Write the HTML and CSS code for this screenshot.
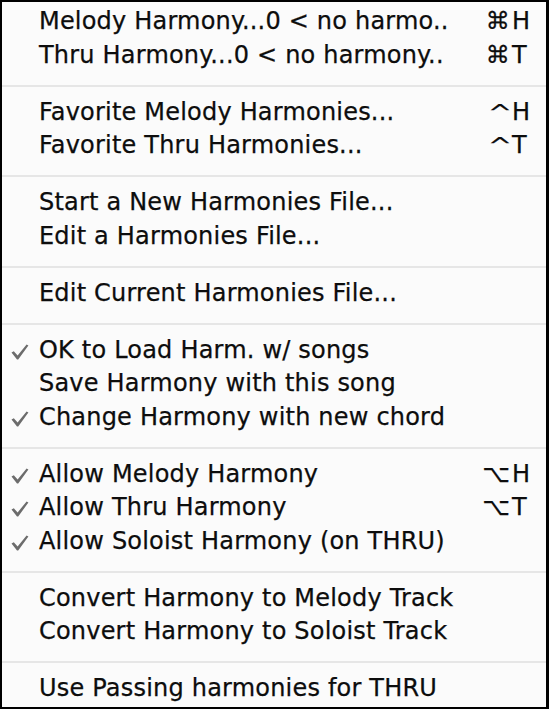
FILE: index.html
```html
<!DOCTYPE html>
<html>
<head>
<meta charset="utf-8">
<link rel="stylesheet" href="styles.css">
</head>
<body>
<div class="menu">
  <div class="item"><span class="check"></span><span class="label">Melody Harmony...0 &lt; no harmo..</span><span class="mod">⌘</span><span class="key">H</span></div>
  <div class="item"><span class="check"></span><span class="label">Thru Harmony...0 &lt; no harmony..</span><span class="mod">⌘</span><span class="key">T</span></div>
  <div class="sep"></div>
  <div class="item"><span class="check"></span><span class="label">Favorite Melody Harmonies...</span><span class="mod caret">^</span><span class="key">H</span></div>
  <div class="item"><span class="check"></span><span class="label">Favorite Thru Harmonies...</span><span class="mod caret">^</span><span class="key">T</span></div>
  <div class="sep"></div>
  <div class="item"><span class="check"></span><span class="label">Start a New Harmonies File...</span><span class="mod"></span><span class="key"></span></div>
  <div class="item"><span class="check"></span><span class="label">Edit a Harmonies File...</span><span class="mod"></span><span class="key"></span></div>
  <div class="sep"></div>
  <div class="item"><span class="check"></span><span class="label">Edit Current Harmonies File...</span><span class="mod"></span><span class="key"></span></div>
  <div class="sep"></div>
  <div class="item"><span class="check"><svg viewBox="0 0 18 16" class="tick"><path d="M0.5 8.6 L2.8 7.2 L6.6 11.4 L15.6 0.6 L17.4 1.6 L7.2 15.4 L6 15.4 Z"/></svg></span><span class="label">OK to Load Harm. w/ songs</span><span class="mod"></span><span class="key"></span></div>
  <div class="item"><span class="check"></span><span class="label">Save Harmony with this song</span><span class="mod"></span><span class="key"></span></div>
  <div class="item"><span class="check"><svg viewBox="0 0 18 16" class="tick"><path d="M0.5 8.6 L2.8 7.2 L6.6 11.4 L15.6 0.6 L17.4 1.6 L7.2 15.4 L6 15.4 Z"/></svg></span><span class="label">Change Harmony with new chord</span><span class="mod"></span><span class="key"></span></div>
  <div class="sep"></div>
  <div class="item"><span class="check"><svg viewBox="0 0 18 16" class="tick"><path d="M0.5 8.6 L2.8 7.2 L6.6 11.4 L15.6 0.6 L17.4 1.6 L7.2 15.4 L6 15.4 Z"/></svg></span><span class="label">Allow Melody Harmony</span><span class="mod">⌥</span><span class="key">H</span></div>
  <div class="item"><span class="check"><svg viewBox="0 0 18 16" class="tick"><path d="M0.5 8.6 L2.8 7.2 L6.6 11.4 L15.6 0.6 L17.4 1.6 L7.2 15.4 L6 15.4 Z"/></svg></span><span class="label">Allow Thru Harmony</span><span class="mod">⌥</span><span class="key">T</span></div>
  <div class="item"><span class="check"><svg viewBox="0 0 18 16" class="tick"><path d="M0.5 8.6 L2.8 7.2 L6.6 11.4 L15.6 0.6 L17.4 1.6 L7.2 15.4 L6 15.4 Z"/></svg></span><span class="label">Allow Soloist Harmony (on THRU)</span><span class="mod"></span><span class="key"></span></div>
  <div class="sep"></div>
  <div class="item"><span class="check"></span><span class="label">Convert Harmony to Melody Track</span><span class="mod"></span><span class="key"></span></div>
  <div class="item"><span class="check"></span><span class="label">Convert Harmony to Soloist Track</span><span class="mod"></span><span class="key"></span></div>
  <div class="sep"></div>
  <div class="item"><span class="check"></span><span class="label">Use Passing harmonies for THRU</span><span class="mod"></span><span class="key"></span></div>
</div>
</body>
</html>
```

FILE: styles.css
```css
html, body {
  margin: 0;
  padding: 0;
  background: #fafafa;
}

.menu {
  box-sizing: border-box;
  width: 549px;
  height: 709px;
  overflow: hidden;
  border-style: solid;
  border-color: #000;
  border-width: 2px 3px 2px 2px;
  padding-top: 5px;
  background: #fbfbfb;
  font-family: "DejaVu Sans", sans-serif;
  font-size: 24px;
  letter-spacing: 0.2px;
  color: #0d0d0d;
  -webkit-text-stroke: 0.25px #0d0d0d;
  display: flex;
  flex-direction: column;
}

.item {
  display: grid;
  grid-template-columns: 37px 1fr auto 19px;
  align-items: baseline;
  height: 33.5px;
  box-sizing: border-box;
  line-height: 28px;
  padding-right: 15px;
  padding-bottom: 5.5px;
  flex: none;
}

.check {
  display: flex;
  justify-content: flex-start;
  padding-left: 9px;
}

.tick {
  width: 18px;
  height: 16px;
  fill: #6c6c6c;
  transform: translateY(2px);
}

.label {
  white-space: nowrap;
}

.mod {
  text-align: right;
  padding-right: 2px;
}

.caret {
  font-size: 22px;
  transform: scaleX(1.3);
}

.key {
  text-align: left;
  letter-spacing: 0;
}

.sep {
  flex: none;
  height: 23.5px;
  display: flex;
  align-items: center;
}

.sep::before {
  content: "";
  display: block;
  width: 100%;
  height: 2px;
  background: #e6e6e6;
}
```
